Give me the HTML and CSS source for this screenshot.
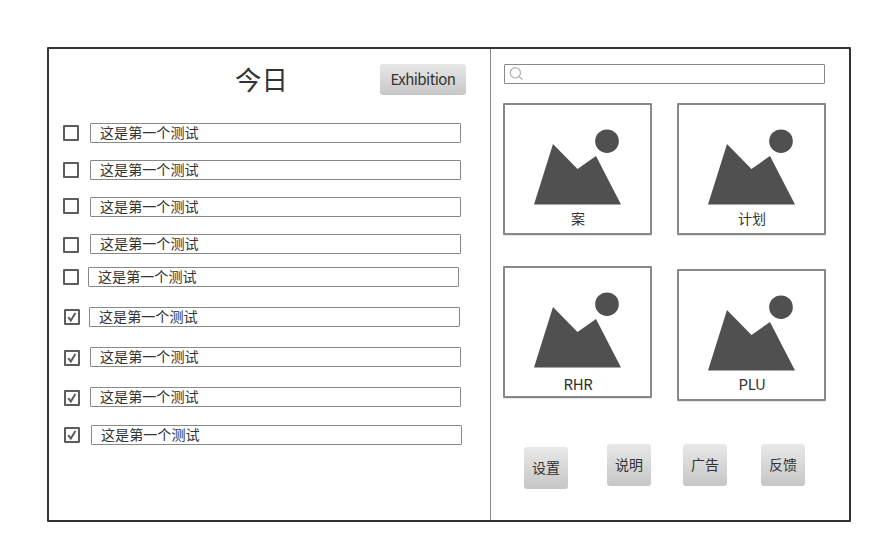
FILE: index.html
```html
<!DOCTYPE html>
<html lang="zh-CN">
<head>
<meta charset="utf-8">
<title>今日</title>
<link rel="stylesheet" href="styles.css">
</head>
<body>
<svg class="defs" width="0" height="0" aria-hidden="true">
  <symbol id="picture" viewBox="0 0 145 100"><path d="M29 99.5 48 39 72.5 64 91 51 116 99.5Z"/><circle cx="102" cy="36.2" r="11.8"/></symbol>
  <symbol id="check" viewBox="0 0 12 12"><path d="M2.2 6.2 4.8 9.6 9.4 2"/></symbol>
</svg>
<main class="frame">
  <section class="today">
    <header class="today-head">
      <h1>今日</h1>
      <button class="btn btn-wide">Exhibition</button>
    </header>
    <ul class="tasks">
      <li class="task"><span class="box"></span><span class="field">这是第一个测试</span></li>
      <li class="task"><span class="box"></span><span class="field">这是第一个测试</span></li>
      <li class="task box-high"><span class="box"></span><span class="field">这是第一个测试</span></li>
      <li class="task box-low"><span class="box"></span><span class="field">这是第一个测试</span></li>
      <li class="task near"><span class="box"></span><span class="field">这是第一个测试</span></li>
      <li class="task done first-done"><span class="box"><svg><use href="#check"/></svg></span><span class="field">这是第一个测试</span></li>
      <li class="task done box-low"><span class="box"><svg><use href="#check"/></svg></span><span class="field">这是第一个测试</span></li>
      <li class="task done box-low"><span class="box"><svg><use href="#check"/></svg></span><span class="field">这是第一个测试</span></li>
      <li class="task done last"><span class="box"><svg><use href="#check"/></svg></span><span class="field">这是第一个测试</span></li>
    </ul>
  </section>
  <section class="side">
    <div class="search"><svg viewBox="0 0 16 16"><circle cx="6.4" cy="6.8" r="5.1"/><path d="M10 10.5 13.5 13.8"/></svg></div>
    <div class="cards">
      <div class="card"><svg><use href="#picture"/></svg><span>案</span></div>
      <div class="card"><svg><use href="#picture"/></svg><span>计划</span></div>
      <div class="card latin"><svg><use href="#picture"/></svg><span>RHR</span></div>
      <div class="card latin lower"><svg><use href="#picture"/></svg><span>PLU</span></div>
    </div>
    <nav class="actions">
      <button class="btn">设置</button>
      <button class="btn">说明</button>
      <button class="btn">广告</button>
      <button class="btn">反馈</button>
    </nav>
  </section>
</main>
</body>
</html>
```
FILE: styles.css
```css
* { box-sizing: border-box; }

body {
  margin: 0;
  padding: 47px 0 0 47px;
  background: #fff;
  color: #333;
  font: 14px/18px "Noto Sans", "Noto Sans CJK SC", sans-serif;
}

.defs { position: absolute; }

.frame {
  display: flex;
  width: 804px;
  height: 475px;
  border: 2px solid #333;
  border-radius: 1px;
}

.today {
  width: 442px;
  border-right: 1px solid #888;
}

.today-head {
  display: flex;
  align-items: flex-start;
  height: 74px;
  padding: 15px 0 0 186px;
}

h1 {
  width: 145px;
  margin: 0;
  font-size: 26.4px;
  font-weight: 400;
  line-height: 32px;
}

.btn {
  width: 44px;
  height: 42px;
  padding: 0;
  border: 0;
  border-radius: 3px;
  background: linear-gradient(#e8e8e8, #c6c6c6);
  color: #333;
  font: inherit;
}

.btn-wide {
  width: 86px;
  height: 31px;
  padding-bottom: 2px;
  font: 15px/18px "Noto Sans CJK SC", sans-serif;
  letter-spacing: -0.55px;
}

.tasks {
  display: flex;
  flex-direction: column;
  gap: 17px;
  margin: 0;
  padding: 0 0 0 14px;
  list-style: none;
}

.task {
  display: flex;
  gap: 11px;
  height: 20px;
}

.box {
  flex: none;
  width: 16px;
  height: 16px;
  margin-top: 2px;
  border: 2px solid #5c5c5c;
  border-radius: 1px;
}

.box svg {
  display: block;
  width: 12px;
  height: 12px;
  fill: none;
  stroke: #5c5c5c;
  stroke-width: 2;
}

.field {
  width: 371px;
  padding-left: 9px;
  border: 1px solid #888;
  border-radius: 1px;
  font-size: 14.1px;
}

.box-high .box { margin-top: 1px; }
.box-low .box { margin-top: 3px; }
.near { gap: 9px; margin-top: -4px; }
.done { gap: 10px; margin: 3px 0 0 1px; }
.first-done { gap: 9px; }
.last { gap: 11px; margin-top: 1px; }

.side { padding: 15px 0 0 12px; }

.search {
  width: 321px;
  height: 20px;
  margin-left: 1px;
  border: 1px solid #888;
  border-radius: 1px;
}

.search svg {
  display: block;
  width: 16px;
  height: 16px;
  margin: 1px 0 0 4px;
  fill: none;
  stroke: #b3b3b3;
  stroke-width: 1.3;
}

.cards {
  display: grid;
  grid-template-columns: 149px 149px;
  gap: 31px 25px;
  margin-top: 19px;
}

.card {
  display: flex;
  flex-direction: column;
  align-items: center;
  height: 132px;
  border: 2px solid #888;
  border-radius: 1px;
  box-shadow: 0 0.5px 0 #ccc;
}

.card svg { width: 145px; height: 100px; fill: #505050; }
.card span { margin: 5px 0 0 1px; }

.card.latin span {
  margin-top: 7px;
  font: 15px/18px "Noto Sans CJK SC", sans-serif;
  letter-spacing: -0.4px;
}

.lower { margin: 3px 0 -3px; }
.card.lower span { margin-top: 4px; }

.actions {
  display: flex;
  margin: 46px 0 0 21px;
}

.actions .btn:nth-child(1) { margin: 3px 39px 0 0; }
.actions .btn:nth-child(2) { margin-right: 32px; }
.actions .btn:nth-child(3) { margin-right: 34px; }
```
